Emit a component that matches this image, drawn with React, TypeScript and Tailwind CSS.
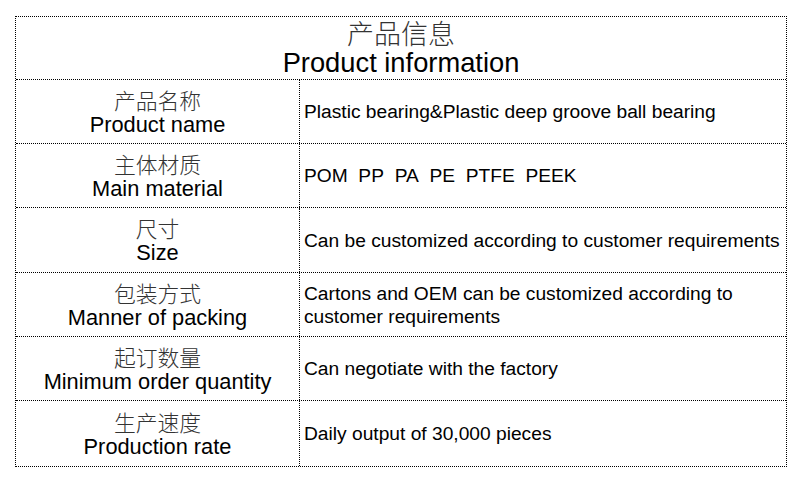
const rows = [
  { zh: '产品名称', en: 'Product name', value: 'Plastic bearing&Plastic deep groove ball bearing', h: 'h-[64px]' },
  { zh: '主体材质', en: 'Main material', value: 'POM\u00a0\u00a0PP\u00a0\u00a0PA\u00a0\u00a0PE\u00a0\u00a0PTFE\u00a0\u00a0PEEK', h: 'h-[64px]' },
  { zh: '尺寸', en: 'Size', value: 'Can be customized according to customer requirements', h: 'h-[65px]' },
  { zh: '包装方式', en: 'Manner of packing', value: 'Cartons and OEM can be customized according to customer requirements', h: 'h-[64px]' },
  { zh: '起订数量', en: 'Minimum order quantity', value: 'Can negotiate with the factory', h: 'h-[64px]' },
  { zh: '生产速度', en: 'Production rate', value: 'Daily output of 30,000 pieces', h: 'h-[65px]' }
];

const zhFont = "font-['Noto_Sans_CJK_SC',serif] font-light text-[#333]";
const enFont = "font-['Liberation_Sans',Arial,sans-serif] text-black";

export default function App() {
  return (
    <div className="h-[500px] w-[800px] bg-white pl-[15px] pt-[16px]">
      <div className="w-[772px] border border-dotted border-black">
        <div className="flex h-[63px] flex-col items-center justify-center border-b border-dotted border-black leading-[30px]">
          <div className={`${zhFont} text-[27px]`}>产品信息</div>
          <div className={`${enFont} text-[27.3px]`}>Product information</div>
        </div>
        {rows.map((row, i) => (
          <div key={row.en} className={`flex ${row.h} ${i < rows.length - 1 ? 'border-b border-dotted border-black' : ''}`}>
            <div className="flex w-[284px] shrink-0 flex-col items-center justify-center border-r border-dotted border-black leading-[25px]">
              <div className={`${zhFont} text-[21.8px]`}>{row.zh}</div>
              <div className={`${enFont} text-[21.8px]`}>{row.en}</div>
            </div>
            <div className={`flex flex-1 items-center pl-[4px] pr-1 text-[19.2px] leading-[23px] ${enFont}`}>
              {row.value}
            </div>
          </div>
        ))}
      </div>
    </div>
  );
}
